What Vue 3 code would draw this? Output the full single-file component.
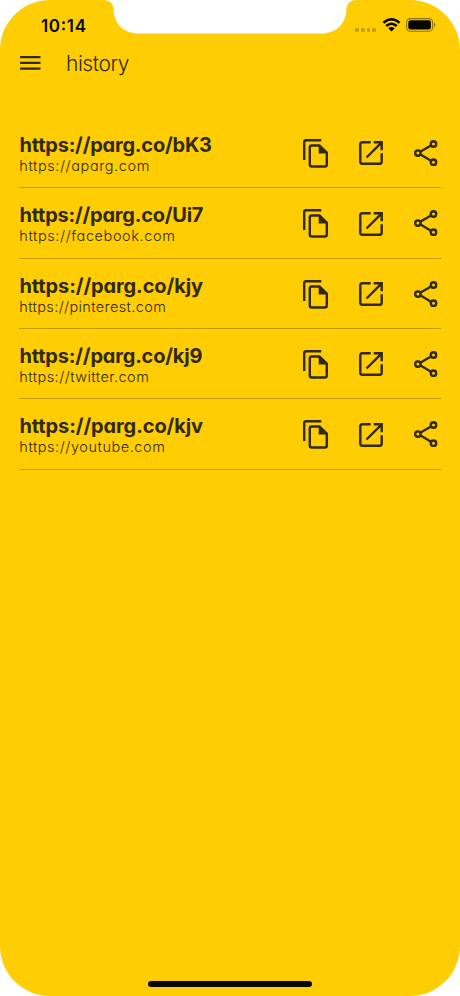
<script setup>
// Label widths keep the wide geometric letter fit of each link.
const links = [
  { short: 'https://parg.co/bK3', shortWidth: 192.5, full: 'https://aparg.com', fullWidth: 130 },
  { short: 'https://parg.co/Ui7', shortWidth: 184, full: 'https://facebook.com', fullWidth: 155.5 },
  { short: 'https://parg.co/kjy', shortWidth: 183.5, full: 'https://pinterest.com', fullWidth: 146.5 },
  { short: 'https://parg.co/kj9', shortWidth: 183, full: 'https://twitter.com', fullWidth: 129.5 },
  { short: 'https://parg.co/kjv', shortWidth: 183.5, full: 'https://youtube.com', fullWidth: 145.5 },
]
</script>

<template>
  <div class="screen">
    <svg class="notch" viewBox="0 0 250 34" aria-hidden="true">
      <path d="M0 0H250Q242.500 1 241.500 8C241.500 24 231 33.500 216 33.500H34C19 33.500 8.500 24 8.500 8Q7.500 1 0 0Z" />
    </svg>

    <header class="status">
      <svg class="clock" width="60" height="24"><text x="0" y="17.500" textLength="45">10:14</text></svg>
      <div class="indicators">
        <div class="signal"><i v-for="n in 4" :key="n"></i></div>
        <svg class="wifi" width="19" height="14" viewBox="0 0 19 14">
          <path d="M1.400 4.900Q9.500-2.500 17.600 4.900M4.200 8Q9.500 3.500 14.800 8" fill="none" stroke="#080600" stroke-width="2.500" />
          <path d="M6.300 10.200Q9.500 7.700 12.700 10.200L9.500 13.500Z" fill="#080600" />
        </svg>
        <svg class="battery" width="30" height="14" viewBox="0 0 30 14">
          <rect x=".6" y=".6" width="26" height="12.600" rx="3.800" fill="none" stroke="#8c7104" stroke-width="1.100" />
          <rect x="2.300" y="2.300" width="22.600" height="9.200" rx="2.200" fill="#080600" />
          <path d="M28 4.800Q31 7 28 9.200Z" fill="#8c7104" />
        </svg>
      </div>
    </header>

    <nav class="bar">
      <svg class="menu" width="21" height="14" viewBox="0 0 21 14">
        <path d="M0 1.200H20.500M0 6.900H20.500M0 12.600H20.500" stroke="#30290c" stroke-width="2.200" />
      </svg>
      <svg class="heading" width="90" height="30"><text x="0" y="22.500" textLength="63.500">history</text></svg>
    </nav>

    <main class="list">
      <article v-for="link in links" :key="link.short" class="row">
        <svg class="labels" width="220" height="50">
          <text class="short" x="0.500" y="34" :textLength="link.shortWidth">{{ link.short }}</text>
          <text class="full" x="0.300" y="53" :textLength="link.fullWidth">{{ link.full }}</text>
        </svg>
        <div class="actions">
          <svg width="25" height="29" viewBox="0 0 25 29">
            <path d="M1.200 21V3.200Q1.200 1.200 3.200 1.200H18.300" fill="none" stroke="#30290c" stroke-width="2.400" />
            <path d="M8.800 6.500H16.600L23.800 13.700V25.500Q23.800 27.500 21.800 27.500H8.800Q6.800 27.500 6.800 25.500V8.500Q6.800 6.500 8.800 6.500Z" fill="none" stroke="#30290c" stroke-width="2.400" stroke-linejoin="round" />
            <path d="M15.700 6.300V14.500H24Z" fill="#30290c" />
          </svg>
          <svg class="open" width="24" height="24" viewBox="0 0 24 24">
            <path d="M11.700 1.300H3.200Q1.300 1.300 1.300 3.200V20.800Q1.300 22.700 3.200 22.700H20.800Q22.700 22.700 22.700 20.800V12.300M14.700 1.300H22.700V9.300M22.200 1.800L7.500 16.500" fill="none" stroke="#30290c" stroke-width="2.400" />
          </svg>
          <svg class="share" width="24" height="27" viewBox="0 0 24 27">
            <path d="M6.600 11.600L17 5.500M6.600 14.600L17 20.700" stroke="#30290c" stroke-width="2.300" />
            <g fill="none" stroke="#30290c" stroke-width="2.400">
              <circle cx="3.900" cy="13.100" r="2.700" />
              <circle cx="19.500" cy="4" r="2.700" />
              <circle cx="19.500" cy="22.200" r="2.700" />
            </g>
          </svg>
        </div>
      </article>
    </main>
    <div class="home"></div>
  </div>
</template>

<style>
body {
  margin: 0;
  background: #fff;
}
</style>

<style scoped>
.screen {
  position: relative;
  display: flex;
  flex-direction: column;
  box-sizing: border-box;
  width: 460px;
  height: 996px;
  overflow: hidden;
  border-radius: 50px;
  background: #ffcd03;
  font-family: Inter, "Liberation Sans", sans-serif;
  font-feature-settings: "cv11";
}

svg {
  display: block;
  flex: none;
  overflow: visible;
}

.notch {
  position: absolute;
  top: 0;
  left: 105px;
  width: 250px;
  height: 34px;
  fill: #fff;
}

.status {
  display: flex;
  justify-content: space-between;
  height: 48px;
  padding: 14px 24px 0 41px;
  box-sizing: border-box;
}

.clock {
  font-size: 17px;
  font-weight: 600;
  fill: #080600;
}

.indicators {
  display: flex;
  align-items: flex-start;
  padding-top: 4px;
}

.signal {
  display: flex;
  gap: 2px;
  padding: 10px 6px 0 0;
}

.signal i {
  width: 3.700px;
  height: 4px;
  border-radius: 1.200px;
  background: #c9a00a;
}

.battery {
  margin-left: 5px;
}

.bar {
  display: flex;
  align-items: center;
  gap: 25px;
  height: 30px;
  padding: 0 20px;
}

.heading {
  font-size: 21px;
  font-weight: 300;
  fill: #30290c;
}

.list {
  margin: 39.800px 19px 0;
}

.row {
  display: flex;
  align-items: flex-start;
  justify-content: space-between;
  box-sizing: border-box;
  height: 70.400px;
  border-bottom: 1px solid #c29c08;
}

.labels {
  fill: #30290c;
}

.short {
  font-size: 20px;
  font-weight: 700;
}

.full {
  font-size: 14.500px;
  font-weight: 300;
}

.actions {
  display: flex;
  align-items: center;
  gap: 31px;
  height: 29px;
  padding: 21px 3.500px 0 0;
}

.home {
  width: 164px;
  height: 6px;
  margin: auto auto 9px;
  border-radius: 3px;
  background: #080600;
}
</style>
